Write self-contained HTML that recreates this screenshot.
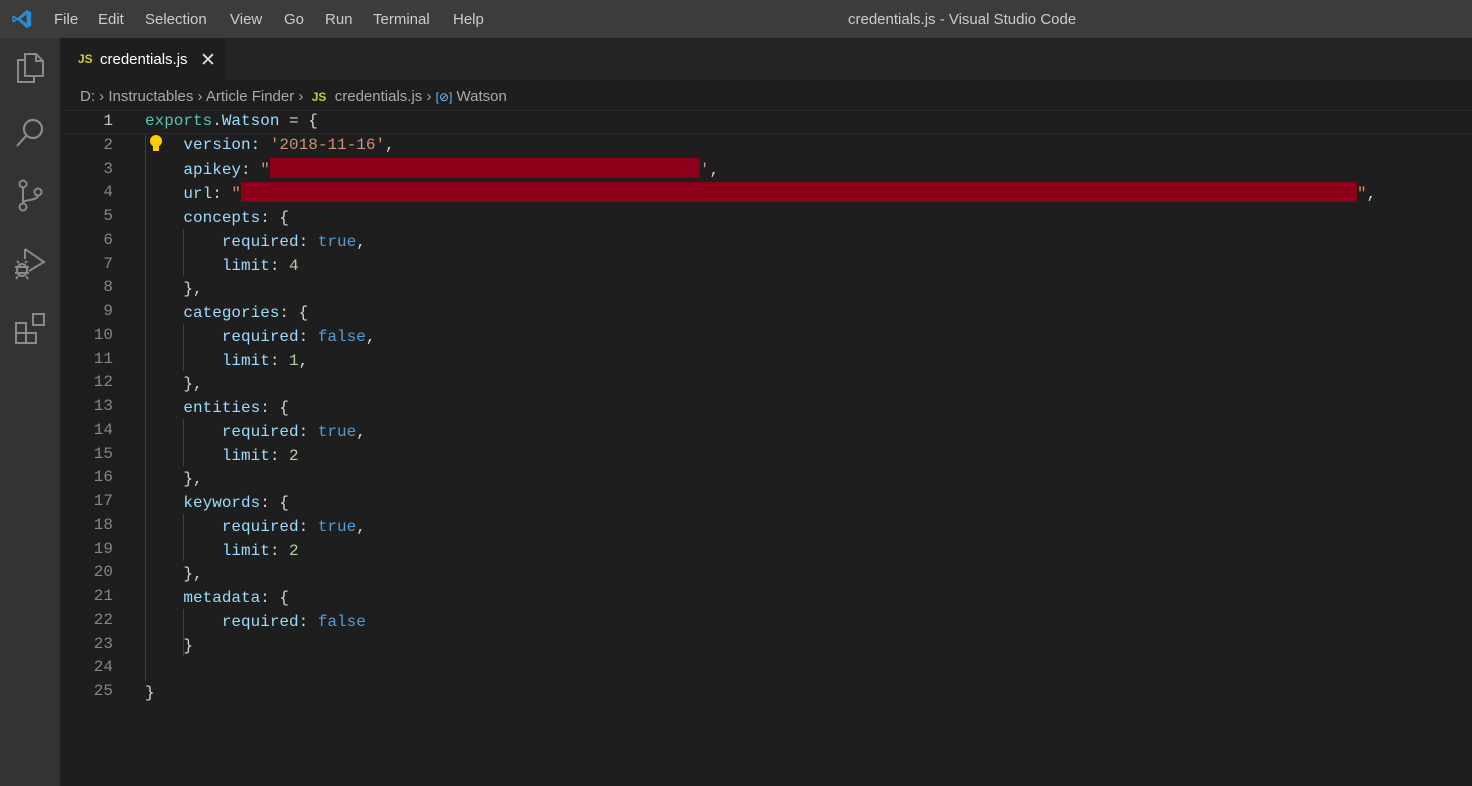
<!DOCTYPE html>
<html><head><meta charset="utf-8"><style>
*{margin:0;padding:0;box-sizing:border-box}
body{width:1472px;height:786px;background:#1e1e1e;overflow:hidden;font-family:"Liberation Sans",sans-serif;position:relative}
#title{position:absolute;left:0;top:0;width:1472px;height:38px;background:#3c3c3c;color:#ccc;font-size:15px}
#title .m{position:absolute;top:11px}
#act{position:absolute;left:0;top:38px;width:60px;height:748px;background:#333}
#tabs{position:absolute;left:60px;top:38px;width:1412px;height:42px;background:#252526}
#tab{position:absolute;left:0;top:0;width:165px;height:42px;background:#1e1e1e}
.js{color:#cbcb41;font-weight:bold;font-size:12px}
#bc{position:absolute;left:80px;top:88px;color:#a9a9a9;font-size:15px;white-space:pre}
.code{position:absolute;font-family:"Liberation Mono",monospace;font-size:16px;white-space:pre;line-height:23.75px}
#nums{left:60px;top:110px;width:53px;text-align:right;color:#858585}
#src{left:145px;top:110px;color:#d4d4d4}
.k{color:#9cdcfe}.s{color:#ce9178}.b{color:#569cd6}.n{color:#b5cea8}.g{color:#4ec9b0}
.red{display:inline-block;background:#8b0018;height:20px;vertical-align:-4px}
</style></head><body>
<div id="title">
<svg style="position:absolute;left:11px;top:8px" width="22" height="22" viewBox="0 0 24 24"><path d="M17 2 L22 4.5 V19.5 L17 22 L7 13 L3 16 L1.5 15 V9 L3 8 L7 11 Z M17 7 L10.5 12 L17 17 Z M3 10 V14 L5 12 Z" fill="#2b8ad4" fill-rule="evenodd"/></svg>
<span class="m" style="left:54px">File</span><span class="m" style="left:98px">Edit</span><span class="m" style="left:145px">Selection</span><span class="m" style="left:230px">View</span><span class="m" style="left:284px">Go</span><span class="m" style="left:325px">Run</span><span class="m" style="left:373px">Terminal</span><span class="m" style="left:453px">Help</span>
<span class="m" style="left:848px;color:#ccc">credentials.js - Visual Studio Code</span>
</div>
<div id="act">
<svg style="position:absolute;left:14px;top:12px" width="32" height="34" viewBox="0 0 32 34" fill="none" stroke="#8a8a8a" stroke-width="2"><path d="M11 4 H22 L29 11 V26 H11 Z M22 4 V11 H29"/><path d="M11 10 H4 V32 H20 V26"/></svg>
<svg style="position:absolute;left:14px;top:78px" width="32" height="34" viewBox="0 0 32 34" fill="none" stroke="#8a8a8a" stroke-width="2.2"><circle cx="19" cy="13" r="9"/><path d="M12 20 L3 30"/></svg>
<svg style="position:absolute;left:14px;top:140px" width="32" height="36" viewBox="0 0 32 36" fill="none" stroke="#8a8a8a" stroke-width="2"><circle cx="9" cy="6" r="3.5"/><circle cx="9" cy="29" r="3.5"/><circle cx="24" cy="14" r="3.5"/><path d="M9 9.5 V25.5 M24 17.5 C24 23 9 21 9 25"/></svg>
<svg style="position:absolute;left:13px;top:207px" width="34" height="36" viewBox="0 0 34 36" fill="none" stroke="#8a8a8a" stroke-width="2"><path d="M12 4 L31 17 L16 26"/><path d="M12 4 V14"/><ellipse cx="9" cy="25" rx="5" ry="6"/><path d="M2 22 H16 M2 28 H16 M5 31 L3 34 M13 31 L15 34 M6 18 L4 16 M12 18 L14 16"/></svg>
<svg style="position:absolute;left:14px;top:272px" width="34" height="36" viewBox="0 0 34 36" fill="none" stroke="#8a8a8a" stroke-width="2"><rect x="2" y="13" width="10" height="10"/><rect x="2" y="23" width="10" height="10"/><rect x="12" y="23" width="10" height="10"/><rect x="19" y="4" width="11" height="11"/></svg>
</div>
<div id="tabs"><div id="tab">
<span class="js" style="position:absolute;left:18px;top:14px">JS</span>
<span style="position:absolute;left:40px;top:13px;color:#fff;font-size:15px">credentials.js</span>
<span style="position:absolute;left:140px;top:11px;color:#ddd;font-size:19px">✕</span>
</div></div>
<div id="bc">D: › Instructables › Article Finder ›  <span class="js">JS</span>  credentials.js › <span style="color:#75beff;font-size:12px">[⊘]</span> Watson</div>
<div style="position:absolute;left:60px;top:110px;width:1412px;height:24px;border-top:1px solid #282828;border-bottom:1px solid #282828"></div>
<div style="position:absolute;left:145px;top:134px;width:1px;height:547px;background:#404040"></div>
<div style="position:absolute;left:183px;top:229px;width:1px;height:47px;background:#404040"></div>
<div style="position:absolute;left:183px;top:324px;width:1px;height:47px;background:#404040"></div>
<div style="position:absolute;left:183px;top:419px;width:1px;height:47px;background:#404040"></div>
<div style="position:absolute;left:183px;top:514px;width:1px;height:47px;background:#404040"></div>
<div style="position:absolute;left:183px;top:609px;width:1px;height:47px;background:#404040"></div>
<svg style="position:absolute;left:148px;top:134px" width="16" height="20" viewBox="0 0 16 20"><circle cx="8" cy="7" r="6" fill="#ffcc00"/><rect x="5" y="12" width="6" height="5" fill="#ffcc00"/></svg>
<div class="code" id="nums"><span style="color:#c6c6c6">1</span>
2
3
4
5
6
7
8
9
10
11
12
13
14
15
16
17
18
19
20
21
22
23
24
25</div>
<div class="code" id="src"><span class="g">exports</span>.<span class="k">Watson</span> = {
    <span class="k">version</span>: <span class="s">'2018-11-16'</span>,
    <span class="k">apikey</span>: <span class="s">"</span><span class="red" style="width:430px"></span><span class="s">'</span>,
    <span class="k">url</span>: <span class="s">"</span><span class="red" style="width:1116px"></span><span class="s">"</span>,
    <span class="k">concepts</span>: {
        <span class="k">required</span>: <span class="b">true</span>,
        <span class="k">limit</span>: <span class="n">4</span>
    },
    <span class="k">categories</span>: {
        <span class="k">required</span>: <span class="b">false</span>,
        <span class="k">limit</span>: <span class="n">1</span>,
    },
    <span class="k">entities</span>: {
        <span class="k">required</span>: <span class="b">true</span>,
        <span class="k">limit</span>: <span class="n">2</span>
    },
    <span class="k">keywords</span>: {
        <span class="k">required</span>: <span class="b">true</span>,
        <span class="k">limit</span>: <span class="n">2</span>
    },
    <span class="k">metadata</span>: {
        <span class="k">required</span>: <span class="b">false</span>
    }

}</div>
</body></html>
